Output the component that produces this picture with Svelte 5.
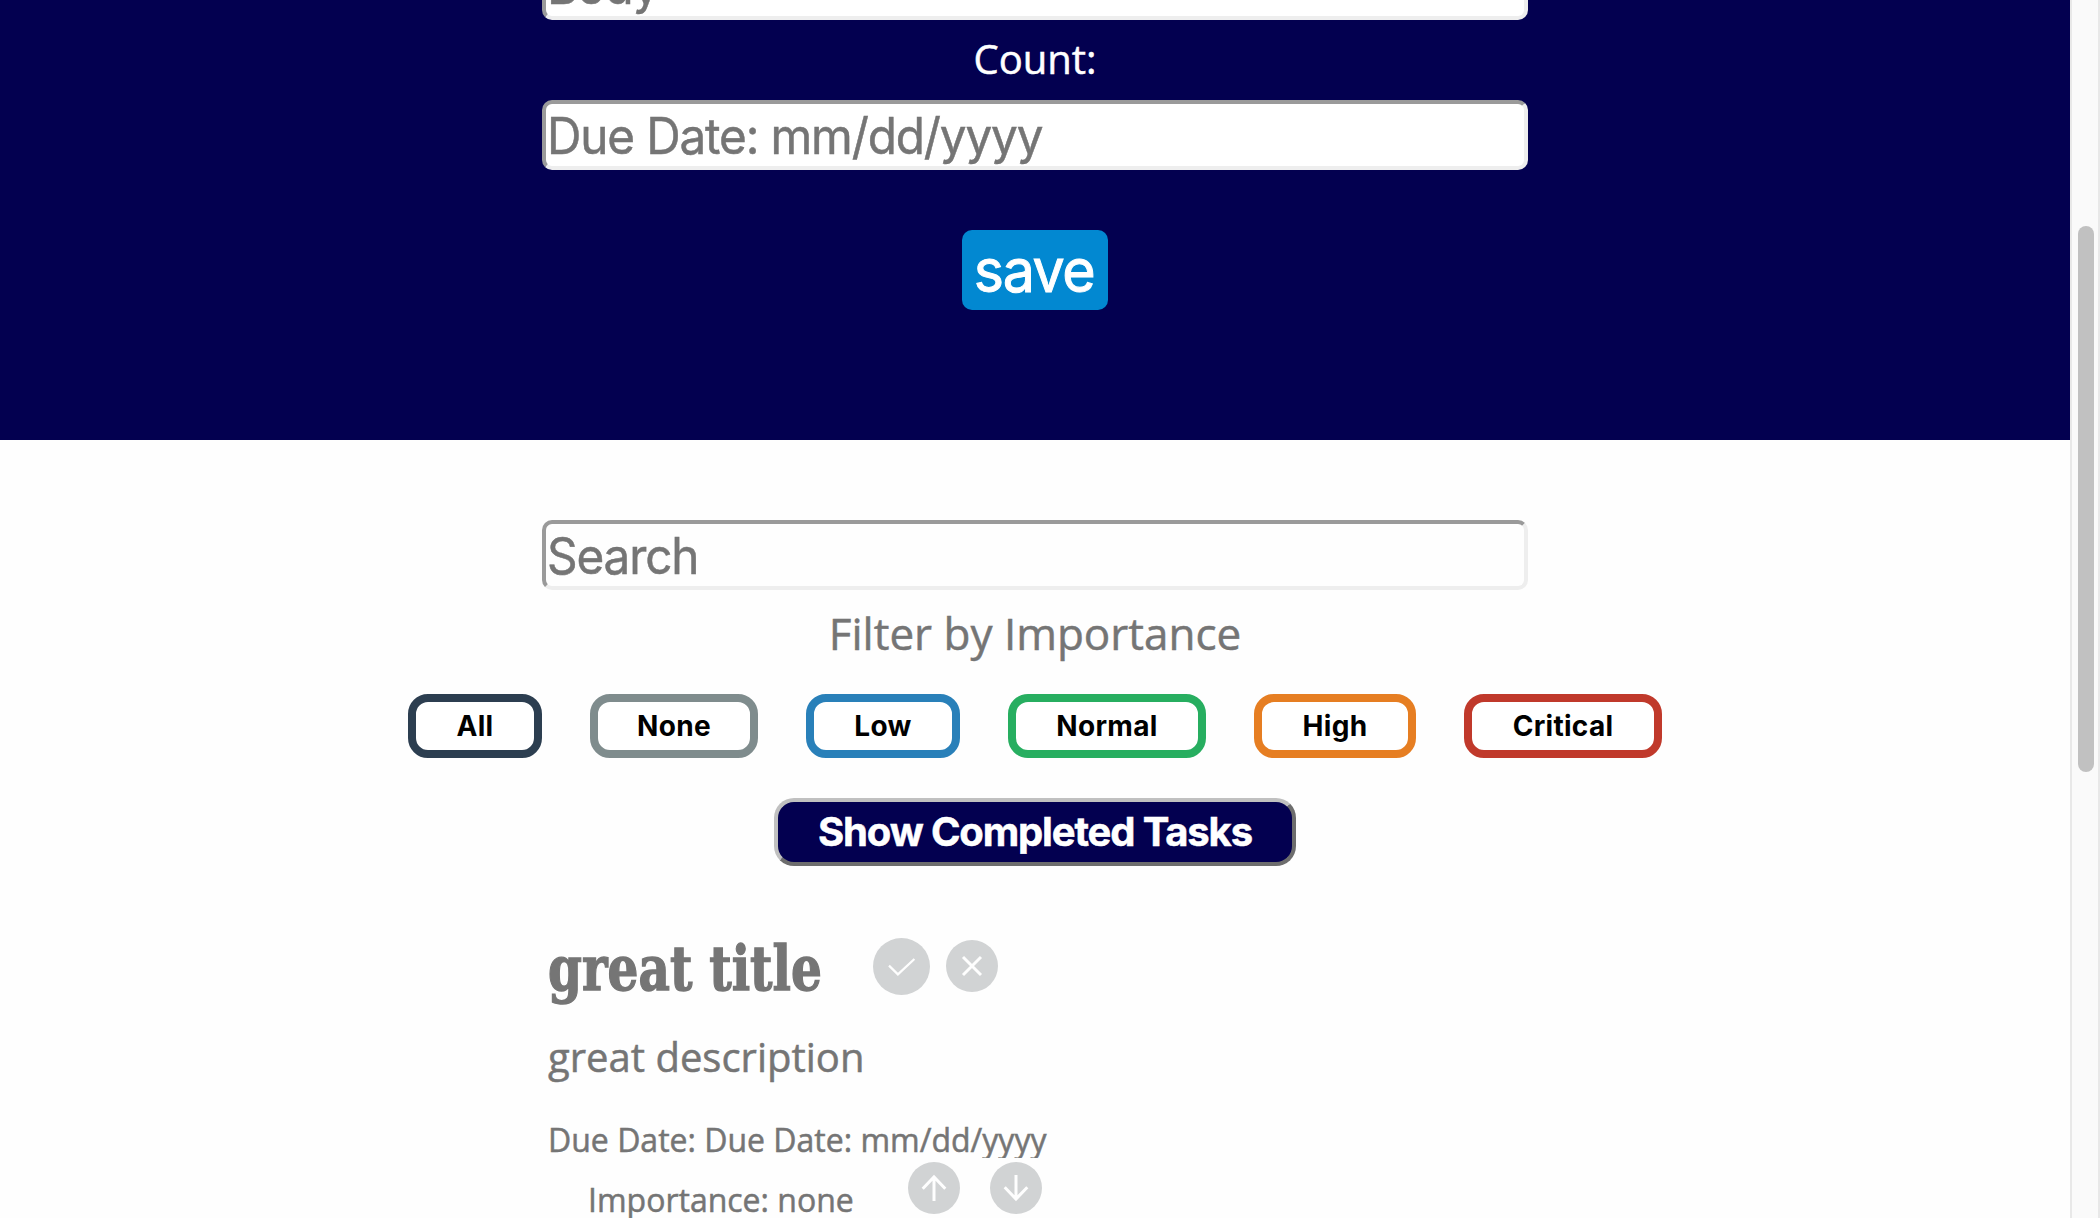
<script>
  const filters = ['All', 'None', 'Low', 'Normal', 'High', 'Critical'];
</script>

<div class="window">
  <div class="page">
    <header class="hero">
      <div class="field body-field"><span>Body</span></div>
      <p class="count">Count:</p>
      <div class="field"><span>Due Date: mm/dd/yyyy</span></div>
      <button class="save"><span>save</span></button>
    </header>

    <main>
      <div class="field search"><span>Search</span></div>
      <h2>Filter by Importance</h2>
      <nav>
        {#each filters as name}
          <button class="filter {name.toLowerCase()}">{name}</button>
        {/each}
      </nav>
      <button class="completed"><span>Show Completed Tasks</span></button>

      <article>
        <div class="title-row">
          <h1><span>great title</span></h1>
          <svg class="icon check" viewBox="0 0 57 57">
            <circle cx="28.5" cy="28.5" r="28.5" />
            <path d="M16 27.6 24.9 36.4 41.4 21" />
          </svg>
          <svg class="icon" viewBox="0 0 52 52">
            <circle cx="26" cy="26" r="26" />
            <path d="M17 17 35 35M35 17 17 35" />
          </svg>
        </div>
        <p class="description">great description</p>
        <p class="due"><span>Due Date: Due Date: mm/dd/yyyy</span></p>
        <div class="importance-row">
          <p class="importance">Importance: none</p>
          <svg class="icon" viewBox="0 0 52 52">
            <circle cx="26" cy="26" r="26" />
            <path d="M26 39V15M14.7 26.7 26 15 37.3 26.7" />
          </svg>
          <svg class="icon" viewBox="0 0 52 52">
            <circle cx="26" cy="26" r="26" />
            <path d="M26 13V37M14.7 25.3 26 37 37.3 25.3" />
          </svg>
        </div>
      </article>
    </main>
  </div>
  <aside><div class="thumb"></div></aside>
</div>

<style>
  :global(body) { margin: 0; overflow: hidden; background: #fefefe; }
  * { box-sizing: border-box; }
  p, h1, h2 { margin: 0; font-weight: 400; white-space: nowrap; }
  button { margin: 0; padding: 0; border: 0; white-space: nowrap; font-family: Inter, sans-serif; }
  .window { display: flex; width: 2100px; height: 1218px; overflow: hidden; }
  .page { width: 2070px; color: #757575; font-family: "Open Sans", sans-serif; -webkit-text-stroke: 0.5px; }
  .hero, main { display: flex; flex-direction: column; align-items: center; }
  .hero { height: 440px; overflow: hidden; background: #030050; }
  .field {
    flex: none;
    width: 986px;
    height: 70px;
    padding-left: 1px;
    border: 4px solid;
    border-color: #9a9a9a #eee #eee #9a9a9a;
    border-radius: 10px;
    background: #fff;
    color: #757575;
    font: 400 50px/64px Inter, sans-serif;
    letter-spacing: -1.2px;
    white-space: nowrap;
  }
  .field span { display: inline-block; transform: scaleX(0.953); transform-origin: 0 50%; }
  .body-field { margin-top: -50px; }
  .count { height: 80px; color: #fff; font-size: 40px; line-height: 78px; }
  .save {
    flex: none;
    width: 146px;
    height: 80px;
    margin-top: 60px;
    border-radius: 10px;
    background: #0288d1;
    color: #fff;
    font-size: 60px;
    line-height: 81px;
    letter-spacing: -1.5px;
    text-indent: -1px;
    -webkit-text-stroke: 1px;
  }
  .save span { display: inline-block; transform: scaleX(0.955); }
  .search { margin-top: 80px; background: #fefefe; }
  h2 { height: 104px; font-size: 44px; line-height: 87px; }
  nav { display: flex; gap: 48px; }
  .filter {
    height: 64px;
    border: 8px solid;
    border-radius: 20px;
    background: #fff;
    color: #000;
    font-size: 28px;
    font-weight: 700;
    line-height: 48px;
    letter-spacing: 0.3px;
    -webkit-text-stroke: 0;
  }
  .all { width: 134px; border-color: #2c3e50; }
  .none { width: 168px; border-color: #7f8c8d; }
  .low { width: 154px; border-color: #2980b9; }
  .normal { width: 198px; border-color: #27ae60; }
  .high { width: 162px; border-color: #e67e22; }
  .critical { width: 198px; border-color: #c0392b; }
  .completed {
    width: 522px;
    height: 68px;
    margin-top: 40px;
    border: 4px solid;
    border-color: #c0c0c0 #6d6d6d #6d6d6d #c0c0c0;
    border-radius: 20px;
    background: #030050;
    color: #fff;
    font-size: 40px;
    font-weight: 700;
    line-height: 60px;
    letter-spacing: -1.15px;
  }
  article { width: 986px; padding: 60px 0 0 6px; }
  .title-row { display: flex; align-items: center; height: 80px; }
  h1 { width: 324.6px; padding-top: 5px; font: 700 61px/86px "DejaVu Serif", serif; -webkit-text-stroke: 1.4px; }
  h1 span { display: inline-block; transform: scaleX(.796); transform-origin: 0 50%; }
  .icon { flex: none; width: 52px; height: 52px; fill: #d1d3d4; }
  .icon path { fill: none; stroke: #fefefe; stroke-width: 3; }
  .icon.check { width: 57px; height: 57px; margin-right: 16px; }
  .icon.check path { stroke-width: 2.2; }
  .description { height: 104px; font-size: 40px; line-height: 102px; }
  .due { height: 48px; overflow: hidden; font-size: 32px; line-height: 59px; }
  .importance-row { display: flex; align-items: flex-start; padding: 4px 0 0 40px; }
  .importance { width: 320px; font-size: 32px; line-height: 76px; }
  .importance-row .icon + .icon { margin-left: 30px; }
  aside {
    width: 30px;
    padding: 226px 4px 0 6px;
    border: 2px solid #e8e8e8;
    border-width: 0 2px;
    background: #fafafa;
  }
  .thumb { width: 16px; height: 546px; border-radius: 8px; background: #c1c1c1; }
</style>
